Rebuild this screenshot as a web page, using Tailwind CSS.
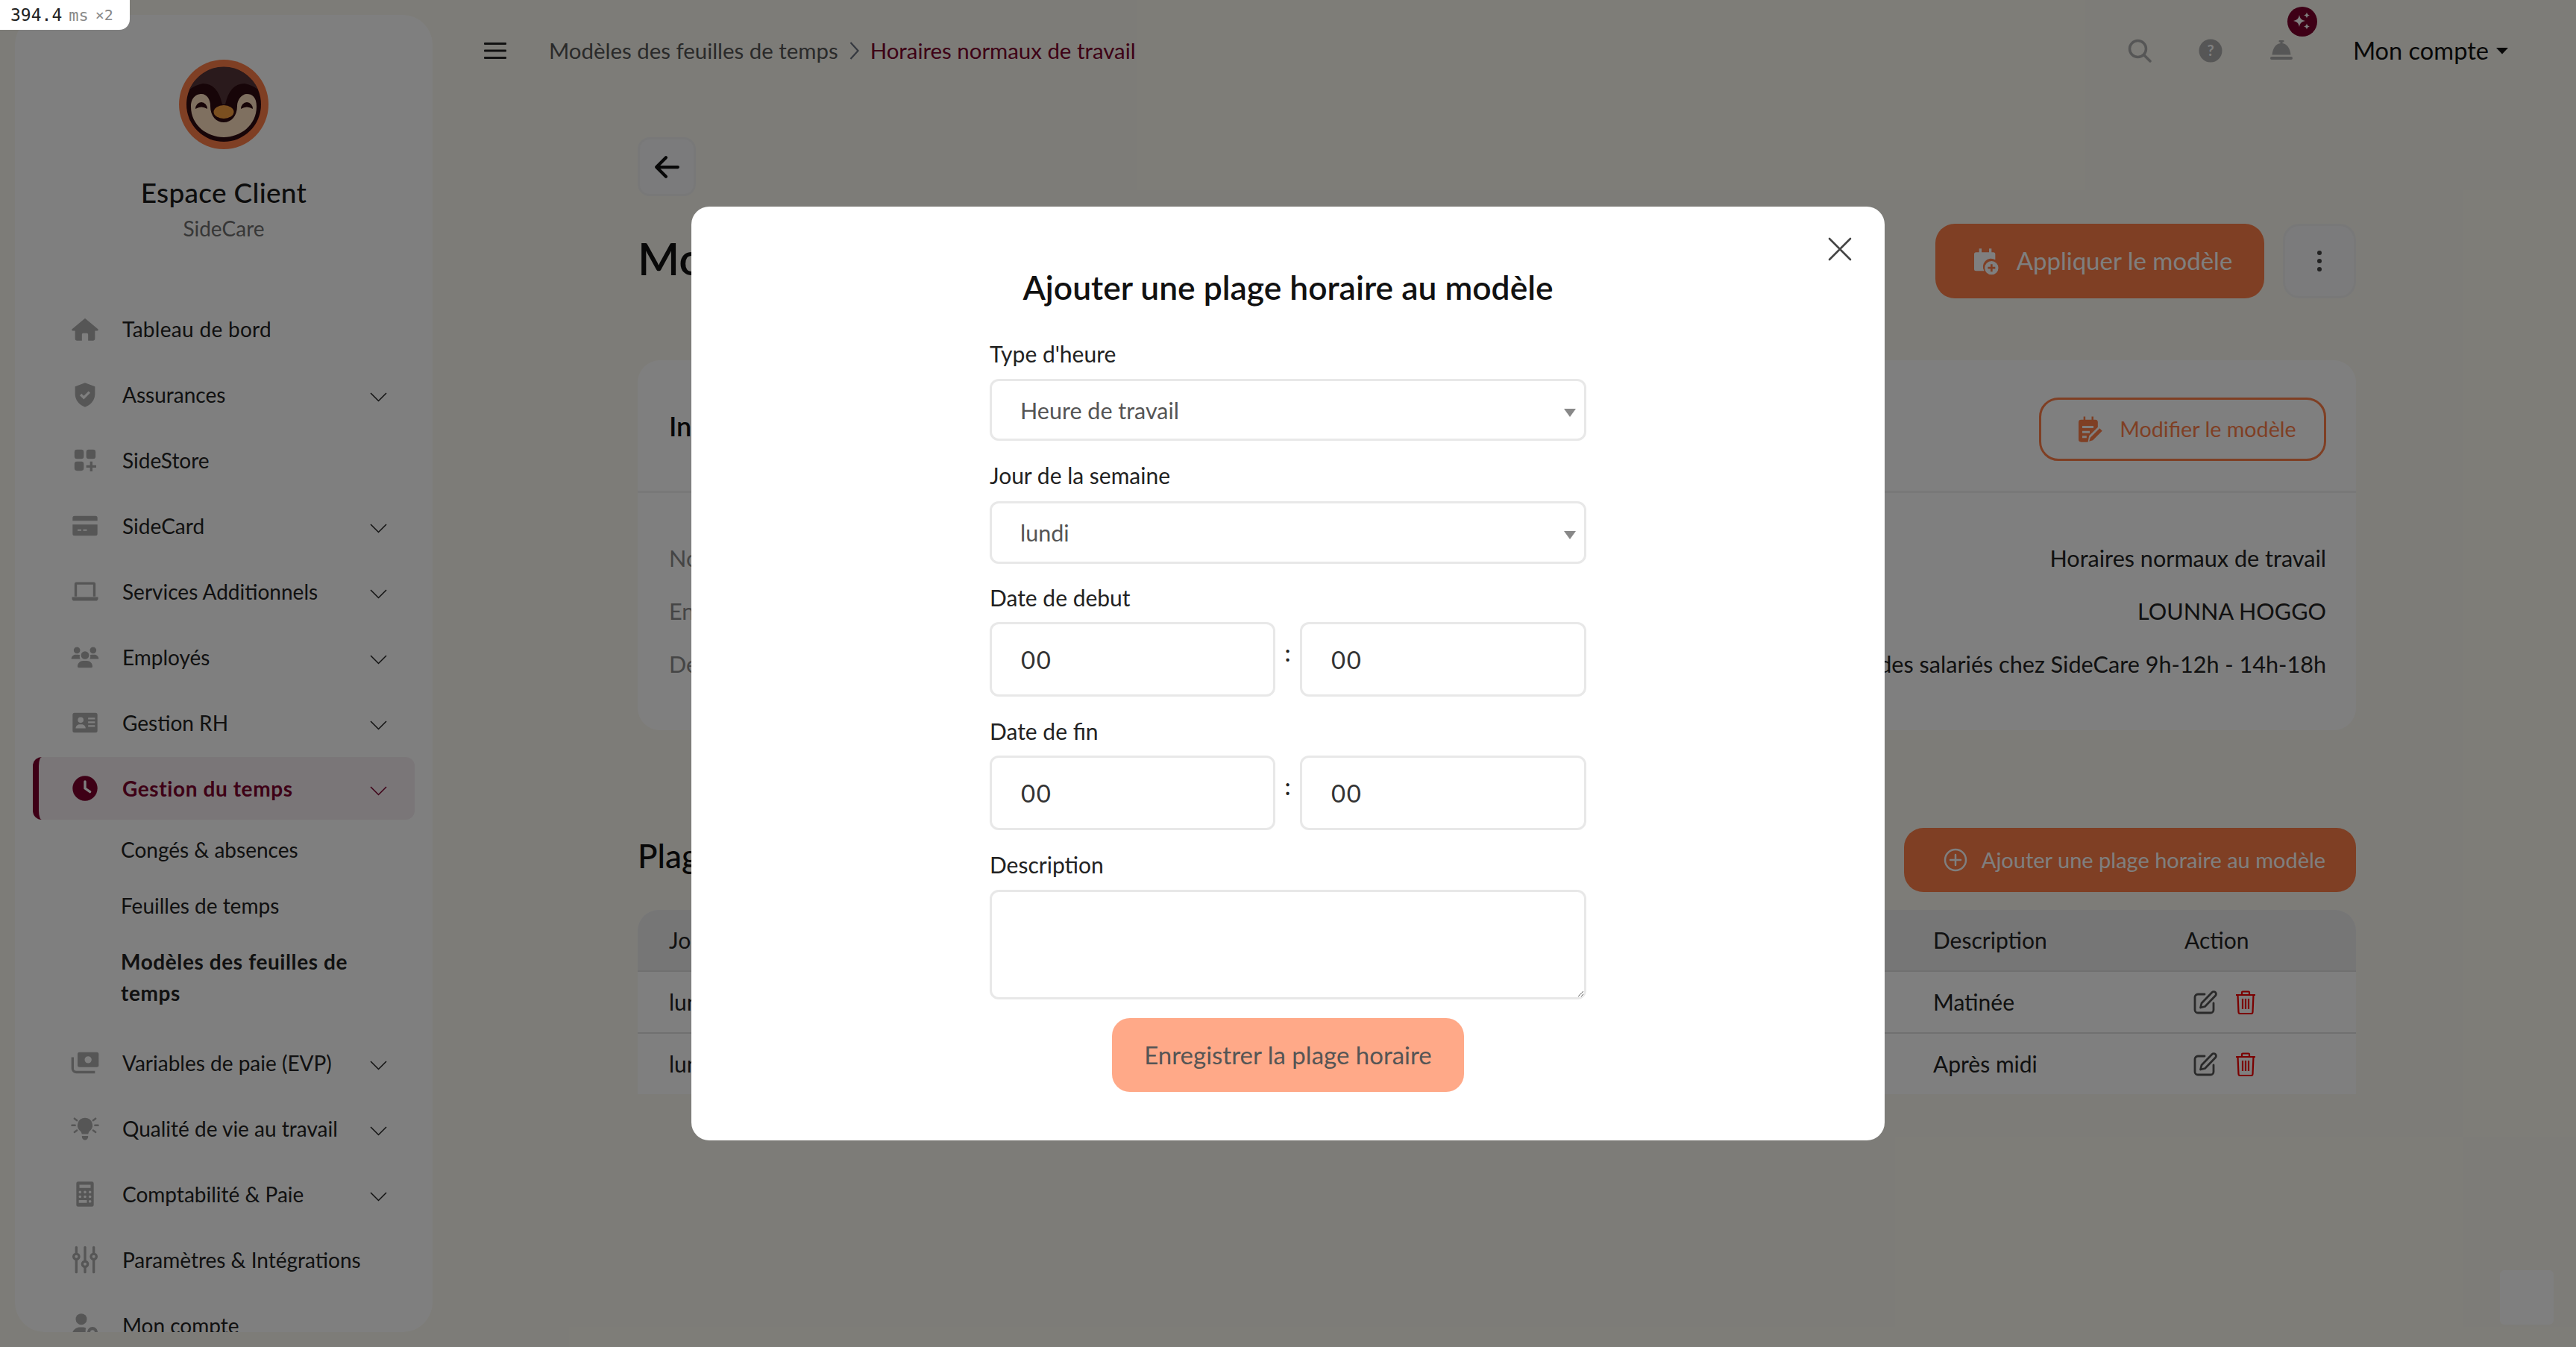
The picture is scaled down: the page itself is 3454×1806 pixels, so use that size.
<!DOCTYPE html>
<html lang="fr">
<head>
<meta charset="utf-8">
<title>Horaires normaux de travail</title>
<script src="https://cdn.jsdelivr.net/npm/@tailwindcss/browser@4"></script>
</head>
<body class="relative h-[1806px] w-[3454px] overflow-hidden bg-[#fbf9f0] text-[#222] [font-family:Lato,sans-serif]">
<div class="flex h-full">
  <!-- Sidebar -->
  <aside class="mt-5 ml-5 h-[1766px] w-[560px] shrink-0 overflow-hidden rounded-[40px] bg-white pt-[60px]">
    <svg class="mx-auto block h-[120px] w-[120px]" viewBox="0 0 120 120">
      <circle cx="60" cy="60" r="60" fill="#ff7e48"/>
      <circle cx="60" cy="60" r="50" fill="#2e0a10"/>
      <path d="M14 40A50 50 0 0 1 106 40Q98 34 88 32Q68 32 62 60L58 60Q52 32 32 32Q22 34 14 40Z" fill="#553538"/>
      <path d="M16 63C16 50 24 46 30 46C38 46 42 54 42 62C42 76 50 84 60 84C70 84 78 76 78 62C78 54 84 46 91 46C98 46 104 50 104 63C104 88 82 104 60 104C38 104 16 88 16 63Z" fill="#ffe0c0"/>
      <path d="M22 66a8 9 0 0 1 16 0q-8-5-16 0ZM83 66a8 9 0 0 1 16 0q-8-5-16 0Z" fill="#2e0a10"/>
      <ellipse cx="60" cy="70" rx="13.5" ry="9" fill="#f59e40"/>
    </svg>
    <div class="mt-9 text-center text-[37px] leading-[44px] font-medium tracking-[0.3px] text-[#1a1a1a]">Espace Client</div>
    <div class="mt-1.5 text-center text-[28px] leading-10 text-[#6e6e6e]">SideCare</div>
    <nav class="mt-[73px] mx-6 text-[28px] leading-[40px]">
      <a class="mb-1 flex h-[84px] items-center pl-[50px]">
        <svg class="h-10 w-10 shrink-0 text-[#acacac]" viewBox="0 0 24 24" fill="currentColor"><path d="M12 3.5 1.6 12.2c-.5.5-.2 1.3.5 1.3H4v6.5c0 .8.7 1.5 1.5 1.5h4v-5a1 1 0 0 1 1-1h3a1 1 0 0 1 1 1v5h4c.8 0 1.5-.7 1.5-1.5v-6.5h1.900c.7 0 1-.8.5-1.3z"/></svg>
        <span class="ml-[30px] tracking-[0.3px]">Tableau de bord</span>
      </a>
      <a class="mb-1 flex h-[84px] items-center pl-[50px] pr-[37px]">
        <svg class="h-10 w-10 shrink-0 text-[#acacac]" viewBox="0 0 24 24" fill="currentColor"><path d="M12 2.5 4 5.5v6c0 4.8 3.4 9 8 10.500 4.600-1.500 8-5.700 8-10.500v-6z"/><path d="m8.500 12 2.500 2.500 4.500-4.500" fill="none" stroke="#fff" stroke-width="2"/></svg>
        <span class="ml-[30px] flex-1">Assurances</span>
        <svg class="mt-1.5 h-4 w-[23px]" viewBox="0 0 23 16" fill="none" stroke="#222" stroke-width="1.500"><path d="m1 3 10.500 10.500L22 3"/></svg>
      </a>
      <a class="mb-1 flex h-[84px] items-center pl-[50px]">
        <svg class="h-10 w-10 shrink-0 text-[#acacac]" viewBox="0 0 24 24" fill="currentColor"><rect x="3.500" y="3.500" width="7.500" height="7.500" rx="2"/><rect x="13" y="3.500" width="7.500" height="7.500" rx="2"/><rect x="3.500" y="13" width="7.500" height="7.500" rx="2"/><path d="M16 13h2v3h3v2h-3v3h-2v-3h-3v-2h3z"/></svg>
        <span class="ml-[30px]">SideStore</span>
      </a>
      <a class="mb-1 flex h-[84px] items-center pl-[50px] pr-[37px]">
        <svg class="h-10 w-10 shrink-0 text-[#acacac]" viewBox="0 0 24 24" fill="currentColor"><path d="M3.500 4h17A1.500 1.500 0 0 1 22 5.500V8H2V5.500A1.500 1.500 0 0 1 3.500 4ZM2 11h20v7.500a1.500 1.500 0 0 1-1.500 1.500h-17A1.500 1.500 0 0 1 2 18.500Z"/><path d="M6 15.500h3M10.500 15.500h3" stroke="#fff" stroke-width="1.200"/></svg>
        <span class="ml-[30px] flex-1">SideCard</span>
        <svg class="mt-1.5 h-4 w-[23px]" viewBox="0 0 23 16" fill="none" stroke="#222" stroke-width="1.500"><path d="m1 3 10.500 10.500L22 3"/></svg>
      </a>
      <a class="mb-1 flex h-[84px] items-center pl-[50px] pr-[37px]">
        <svg class="h-10 w-10 shrink-0 text-[#acacac]" viewBox="0 0 24 24" fill="currentColor"><path d="M5 4.500h14A1.500 1.500 0 0 1 20.500 6v10h-2V6.500h-13V16h-2V6A1.500 1.500 0 0 1 5 4.500Z"/><path d="M1.500 16.500h21v1a2 2 0 0 1-2 2h-17a2 2 0 0 1-2-2z"/></svg>
        <span class="ml-[30px] flex-1">Services Additionnels</span>
        <svg class="mt-1.5 h-4 w-[23px]" viewBox="0 0 23 16" fill="none" stroke="#222" stroke-width="1.500"><path d="m1 3 10.500 10.500L22 3"/></svg>
      </a>
      <a class="mb-1 flex h-[84px] items-center pl-[50px] pr-[37px]">
        <svg class="h-10 w-10 shrink-0 text-[#acacac]" viewBox="0 0 24 24" fill="currentColor"><circle cx="5.500" cy="6.500" r="2.600"/><circle cx="18.500" cy="6.500" r="2.600"/><circle cx="12" cy="10.500" r="3.200"/><path d="M1 13.500c0-2 1.500-3.500 3.500-3.500h2c.5 0 1 .1 1.400.3-.4 1-.3 2.200.3 3.200zM23 13.500c0-2-1.500-3.500-3.500-3.500h-2c-.5 0-1 .1-1.400.3.400 1 .3 2.200-.3 3.200zM6 19.500c0-2.500 2-4.500 4.500-4.500h3c2.500 0 4.500 2 4.500 4.500 0 .6-.4 1-1 1H7c-.6 0-1-.4-1-1Z"/></svg>
        <span class="ml-[30px] flex-1">Employés</span>
        <svg class="mt-1.5 h-4 w-[23px]" viewBox="0 0 23 16" fill="none" stroke="#222" stroke-width="1.500"><path d="m1 3 10.500 10.500L22 3"/></svg>
      </a>
      <a class="mb-1 flex h-[84px] items-center pl-[50px] pr-[37px]">
        <svg class="h-10 w-10 shrink-0 text-[#acacac]" viewBox="0 0 24 24" fill="currentColor"><path fill-rule="evenodd" d="M3.500 4h17A1.500 1.500 0 0 1 22 5.500v13a1.500 1.500 0 0 1-1.500 1.500h-17A1.500 1.500 0 0 1 2 18.500v-13A1.500 1.500 0 0 1 3.500 4Zm5 3.500a2.300 2.300 0 1 0 0 4.600 2.300 2.300 0 0 0 0-4.600ZM4.500 16.500h8c0-1.800-1.500-3.200-3-3.200h-2c-1.500 0-3 1.400-3 3.200ZM14.500 8v1.300h5.500V8Zm0 3v1.300h5.500V11Zm0 3v1.300h5.500V14Z"/></svg>
        <span class="ml-[30px] flex-1">Gestion RH</span>
        <svg class="mt-1.5 h-4 w-[23px]" viewBox="0 0 23 16" fill="none" stroke="#222" stroke-width="1.500"><path d="m1 3 10.500 10.500L22 3"/></svg>
      </a>
      <a class="mb-1 flex h-[84px] items-center rounded-[12px] border-l-[8px] border-[#7c002c] bg-[#f4ecf0] pl-[42px] pr-[37px] font-bold text-[#7c002c]">
        <svg class="h-10 w-10 shrink-0" viewBox="0 0 24 24"><circle cx="12" cy="12" r="10" fill="#7c002c"/><path d="M12 6.500V12l4 2.800" fill="none" stroke="#fff" stroke-width="2" stroke-linecap="round"/></svg>
        <span class="ml-[30px] flex-1 tracking-[0.6px]">Gestion du temps</span>
        <svg class="mt-1.5 h-4 w-[23px]" viewBox="0 0 23 16" fill="none" stroke="#7c002c" stroke-width="1.500"><path d="m1 3 10.500 10.500L22 3"/></svg>
      </a>
      <ul class="flex flex-col gap-[33px] pt-[15px] pb-[31px] pl-[118px] leading-[42px]">
        <li>Congés &amp; absences</li>
        <li>Feuilles de temps</li>
        <li class="w-[340px] font-bold tracking-[0.6px]">Modèles des feuilles de temps</li>
      </ul>
      <a class="mb-1 flex h-[84px] items-center pl-[50px] pr-[37px]">
        <svg class="h-10 w-10 shrink-0 text-[#acacac]" viewBox="0 0 24 24" fill="currentColor"><path fill-rule="evenodd" d="M7.500 3.500h14A1.500 1.500 0 0 1 23 5v9a1.500 1.500 0 0 1-1.500 1.500h-14A1.500 1.500 0 0 1 6 14V5a1.500 1.500 0 0 1 1.500-1.500Zm7 3.200a2.800 2.800 0 1 0 0 5.600 2.800 2.800 0 0 0 0-5.600Z"/><path d="M2 7.500v9a3 3 0 0 0 3 3h15" fill="none" stroke="currentColor" stroke-width="2"/></svg>
        <span class="ml-[30px] flex-1">Variables de paie (EVP)</span>
        <svg class="mt-1.5 h-4 w-[23px]" viewBox="0 0 23 16" fill="none" stroke="#222" stroke-width="1.500"><path d="m1 3 10.500 10.500L22 3"/></svg>
      </a>
      <a class="mb-1 flex h-[84px] items-center pl-[50px] pr-[37px]">
        <svg class="h-10 w-10 shrink-0 text-[#acacac]" viewBox="0 0 24 24" fill="currentColor"><path d="M12 3.500a6 6 0 0 0-3.600 10.800c.5.500.8 1.200 1 2.200h5.200c.2-1 .5-1.700 1-2.200A6 6 0 0 0 12 3.500ZM9.500 18h5v.8a2.500 2.500 0 0 1-5 0Z"/><path d="M3.500 4 5.500 5.500M20.500 4l-2 1.500M1.500 9.500h2.500M20 9.500h2.500M3.500 15l2-1.500M20.500 15l-2-1.500" stroke="currentColor" stroke-width="1.500" stroke-linecap="round"/></svg>
        <span class="ml-[30px] flex-1">Qualité de vie au travail</span>
        <svg class="mt-1.5 h-4 w-[23px]" viewBox="0 0 23 16" fill="none" stroke="#222" stroke-width="1.500"><path d="m1 3 10.500 10.500L22 3"/></svg>
      </a>
      <a class="mb-1 flex h-[84px] items-center pl-[50px] pr-[37px]">
        <svg class="h-10 w-10 shrink-0 text-[#acacac]" viewBox="0 0 24 24" fill="currentColor"><path fill-rule="evenodd" d="M6.500 2h11A1.500 1.500 0 0 1 19 3.500v17a1.500 1.500 0 0 1-1.500 1.500h-11A1.500 1.500 0 0 1 5 20.500v-17A1.500 1.500 0 0 1 6.500 2ZM7.500 4.500V7h9V4.500ZM8 9.300a1.100 1.100 0 1 0 0 2.200 1.100 1.100 0 0 0 0-2.200Zm4 0a1.100 1.100 0 1 0 0 2.200 1.100 1.100 0 0 0 0-2.200Zm4 0a1.100 1.100 0 1 0 0 2.200 1.100 1.100 0 0 0 0-2.200ZM8 13a1.100 1.100 0 1 0 0 2.200A1.100 1.100 0 0 0 8 13Zm4 0a1.100 1.100 0 1 0 0 2.200 1.100 1.100 0 0 0 0-2.200Zm4 0a1.100 1.100 0 1 0 0 2.200 1.100 1.100 0 0 0 0-2.200ZM7 16.800V19h6.500v-2.200ZM16 16.800a1.100 1.100 0 1 0 0 2.200 1.100 1.100 0 0 0 0-2.200Z"/></svg>
        <span class="ml-[30px] flex-1">Comptabilité &amp; Paie</span>
        <svg class="mt-1.5 h-4 w-[23px]" viewBox="0 0 23 16" fill="none" stroke="#222" stroke-width="1.500"><path d="m1 3 10.500 10.500L22 3"/></svg>
      </a>
      <a class="mb-1 flex h-[84px] items-center pl-[50px]">
        <svg class="h-10 w-10 shrink-0 text-[#acacac]" viewBox="0 0 24 24" fill="none" stroke="currentColor" stroke-width="2"><path d="M5 2v5M5 12v10M12 2v11M12 18v4M19 2v5M19 12v10" stroke-linecap="round"/><circle cx="5" cy="9.500" r="2.200"/><circle cx="12" cy="15.500" r="2.200"/><circle cx="19" cy="9.500" r="2.200"/></svg>
        <span class="ml-[30px]">Paramètres &amp; Intégrations</span>
      </a>
      <a class="mb-1 flex h-[84px] items-center pl-[50px]">
        <svg class="h-10 w-10 shrink-0 text-[#acacac]" viewBox="0 0 24 24" fill="currentColor"><circle cx="9" cy="7" r="4.500"/><path d="M1.500 20c0-3.600 2.900-6.500 6.500-6.500h2c1 0 2 .2 2.800.7-.7 1.700-.5 3.900.4 5.800z"/><circle cx="18" cy="17.500" r="3" fill="none" stroke="currentColor" stroke-width="2.500"/></svg>
        <span class="ml-[30px]">Mon compte</span>
      </a>
    </nav>
  </aside>

  <!-- Main -->
  <main class="flex-1 min-w-0">
    <header class="flex h-[136px] items-center pl-[69px] pr-[91px]">
      <svg class="h-[24px] w-[30px] shrink-0" viewBox="0 0 30 24" fill="#222"><rect y="1" width="30" height="3" rx="1"/><rect y="10.500" width="30" height="3" rx="1"/><rect y="20" width="30" height="3" rx="1"/></svg>
      <span class="ml-[57px] text-[29.4px] leading-10 text-[#555]">Modèles des feuilles de temps</span>
      <svg class="ml-[15px] h-[26px] w-[14px]" viewBox="0 0 14 26" fill="none" stroke="#6b7280" stroke-width="2.200"><path d="m1.500 2 10 11-10 11"/></svg>
      <span class="ml-[14px] text-[29.4px] leading-10 text-[#7c002c]">Horaires normaux de travail</span>
      <div class="ml-auto flex items-center">
        <svg class="h-8 w-8 text-[#acacac]" viewBox="0 0 32 32" fill="none" stroke="currentColor" stroke-width="3.500"><circle cx="13.500" cy="13.500" r="11"/><path d="m21.500 21.500 8.500 8.500" stroke-linecap="round"/></svg>
        <svg class="ml-[63px] h-8 w-8 text-[#acacac]" viewBox="0 0 32 32"><circle cx="16" cy="16" r="15.500" fill="currentColor"/><text x="16" y="23" text-anchor="middle" font-size="20" font-weight="700" fill="#fff" font-family="Lato">?</text></svg>
        <div class="relative ml-[63px] h-8 w-8">
          <svg class="h-8 w-8 text-[#acacac]" viewBox="0 0 32 32" fill="currentColor"><rect x="12.500" y="2" width="7" height="2.500" rx="1"/><rect x="14.500" y="3" width="3" height="4"/><path d="M16 6c7 0 11.500 6 12.500 15.500h-25C4.500 12 9 6 16 6Z"/><rect x="1" y="24" width="30" height="4" rx="2"/></svg>
          <div class="absolute -top-[43px] left-[24px] flex h-10 w-10 items-center justify-center rounded-full bg-[#7c002c]">
            <svg class="h-[30px] w-[30px]" viewBox="0 0 30 30" fill="#fff"><path d="M11 6c1 5 3 7 8 8-5 1-7 3-8 8-1-5-3-7-8-8 5-1 7-3 8-8ZM21 2.500c.5 2.500 1.500 3.500 4 4-2.500.5-3.500 1.500-4 4-.5-2.500-1.500-3.500-4-4 2.500-.5 3.500-1.500 4-4ZM21 17.500c.5 2.500 1.500 3.500 4 4-2.500.5-3.500 1.500-4 4-.5-2.500-1.500-3.500-4-4 2.500-.5 3.500-1.500 4-4Z"/></svg>
          </div>
        </div>
        <span class="ml-[80px] text-[32.600px] leading-10 text-[#111]">Mon compte</span>
        <svg class="ml-2.5 h-2.5 w-4" viewBox="0 0 16 10" fill="#111"><path d="M0 1h16L8 9.500z"/></svg>
      </div>
    </header>

    <div class="mr-[295px] ml-[275px]">
      <button class="mt-12 flex h-[79px] w-[78px] items-center justify-center rounded-2xl border-[3px] border-[#f1f1f1] bg-[#f6f6f8]">
        <svg class="h-[34px] w-[34px]" viewBox="0 0 32 32" fill="none" stroke="#111" stroke-width="4" stroke-linecap="round" stroke-linejoin="round"><path d="M30 16H4M15 4 3 16l12 12"/></svg>
      </button>

      <div class="mt-[37px] flex h-[100px] items-center">
        <h1 class="flex-1 pb-2 text-[60px] font-semibold text-[#111]">Modèle</h1>
        <button class="flex h-[100px] w-[441px] items-center justify-center rounded-[26px] bg-[#ff7e48] pl-1 text-[33px] text-white">
          <svg class="h-10 w-10" viewBox="0 0 24 24" fill="#fff"><path d="M7 2h2v3h6V2h2v3h1.500A1.500 1.500 0 0 1 20 6.500V11a6.500 6.500 0 0 0-8.900 9H4.500A1.500 1.500 0 0 1 3 18.500v-12A1.500 1.500 0 0 1 4.500 5H7Z"/><path fill-rule="evenodd" d="M17 12a5.500 5.500 0 1 0 0 11 5.500 5.500 0 0 0 0-11Zm-.8 2.500h1.600v2.200H20v1.600h-2.200v2.200h-1.600v-2.200H14v-1.600h2.200Z"/></svg>
          <span class="ml-[22px]">Appliquer le modèle</span>
        </button>
        <button class="ml-[25px] flex h-[100px] w-[98px] flex-col items-center justify-center gap-[5px] rounded-[22px] border-[3px] border-[#f1f1f1] bg-[#f6f6f8]">
          <span class="h-1.5 w-1.5 rounded-full bg-[#444]"></span>
          <span class="h-1.5 w-1.5 rounded-full bg-[#444]"></span>
          <span class="h-1.5 w-1.5 rounded-full bg-[#444]"></span>
        </button>
      </div>

      <section class="mt-[83px] h-[496px] rounded-[30px] bg-white">
        <div class="flex h-[178px] items-center justify-between border-b-[3px] border-[#f1f1f1] pl-[42px] pr-[40px]">
          <h2 class="text-[36px] font-semibold text-[#111]">Informations</h2>
          <button class="mt-[10px] flex h-[85px] w-[385px] items-center justify-center rounded-[26px] border-[3px] border-[#ff7e48] pl-2 text-[28.700px] text-[#ff7e48]">
            <svg class="h-10 w-10" viewBox="0 0 24 24" fill="#ff7e48"><path fill-rule="evenodd" d="M7 1.500h1.500V4h5V1.500H15V4h1.500A2 2 0 0 1 18.500 6v4l-7 7-1 5H5a2 2 0 0 1-2-2V6a2 2 0 0 1 2-2h2ZM6 9v1.800h9V9Zm0 4v1.800h6V13Zm0 4v1.800h3.500V17Z"/><path d="m20 11 2 2-7.500 7.500-3 1 1-3Z"/></svg>
            <span class="ml-5">Modifier le modèle</span>
          </button>
        </div>
        <dl class="flex flex-col pl-[42px] pr-[40px] pt-[68px] text-[30.600px] leading-10">
          <div class="flex h-[71px] justify-between"><dt class="text-[#8a8a8a]">Nom</dt><dd>Horaires normaux de travail</dd></div>
          <div class="flex h-[71px] justify-between"><dt class="text-[#8a8a8a]">Entreprise</dt><dd>LOUNNA HOGGO</dd></div>
          <div class="flex h-[71px] justify-between"><dt class="text-[#8a8a8a]">Description</dt><dd>Horaires normaux des salariés chez SideCare 9h-12h - 14h-18h</dd></div>
        </dl>
      </section>

      <div class="mt-[131px] flex h-[86px] items-center justify-between">
        <h2 class="pb-3 text-[44px] font-medium text-[#111]">Plages horaires</h2>
        <button class="flex h-[86px] w-[606px] items-center justify-center rounded-[26px] bg-[#ff7e48] pl-3 text-[29px] text-white">
          <svg class="h-8 w-8" viewBox="0 0 32 32" fill="none" stroke="#fff" stroke-width="2.500"><circle cx="16" cy="16" r="14"/><path d="M16 9v14M9 16h14" stroke-linecap="round"/></svg>
          <span class="ml-[19px]">Ajouter une plage horaire au modèle</span>
        </button>
      </div>

      <div class="mt-6 overflow-hidden rounded-t-[28px] bg-white text-[30px]">
        <div class="grid h-[81px] grid-cols-[1737px_337px_1fr] items-center bg-[#ececec]">
          <span class="pl-[42px]">Jour</span><span>Description</span><span>Action</span>
        </div>
        <div class="grid h-[83px] grid-cols-[1737px_337px_1fr] items-center border-t-[2px] border-[#e0e0e0]">
          <span class="pl-[42px]">lundi</span><span>Matinée</span>
          <span class="flex items-center pl-3 gap-[24px]">
            <svg class="h-8 w-8" viewBox="0 0 32 32" fill="none" stroke="#555" stroke-width="2.800" stroke-linecap="round" stroke-linejoin="round"><path d="M15 5H6a4 4 0 0 0-4 4v17a4 4 0 0 0 4 4h17a4 4 0 0 0 4-4v-9"/><path d="M25 2.500a3 3 0 0 1 4.500 4.500L15.500 21.500l-6 1.500 1.500-6Z"/></svg>
            <svg class="h-8 w-[28px]" viewBox="0 0 28 32" fill="none" stroke="#f40000" stroke-width="2.200"><path d="M1 6h26M9 5V2.500A1 1 0 0 1 10 1.500h8a1 1 0 0 1 1 1V5M3.500 6l1 23a2 2 0 0 0 2 2h15a2 2 0 0 0 2-2l1-23M10 11v14M14 11v14M18 11v14"/></svg>
          </span>
        </div>
        <div class="grid h-[83px] grid-cols-[1737px_337px_1fr] items-center border-t-[2px] border-[#e0e0e0]">
          <span class="pl-[42px]">lundi</span><span>Après midi</span>
          <span class="flex items-center pl-3 gap-[24px]">
            <svg class="h-8 w-8" viewBox="0 0 32 32" fill="none" stroke="#555" stroke-width="2.800" stroke-linecap="round" stroke-linejoin="round"><path d="M15 5H6a4 4 0 0 0-4 4v17a4 4 0 0 0 4 4h17a4 4 0 0 0 4-4v-9"/><path d="M25 2.500a3 3 0 0 1 4.500 4.500L15.500 21.500l-6 1.500 1.500-6Z"/></svg>
            <svg class="h-8 w-[28px]" viewBox="0 0 28 32" fill="none" stroke="#f40000" stroke-width="2.200"><path d="M1 6h26M9 5V2.500A1 1 0 0 1 10 1.500h8a1 1 0 0 1 1 1V5M3.500 6l1 23a2 2 0 0 0 2 2h15a2 2 0 0 0 2-2l1-23M10 11v14M14 11v14M18 11v14"/></svg>
          </span>
        </div>
      </div>
    </div>
  </main>
</div>

<!-- floating corner button -->
<div class="absolute top-[1703px] left-[3352px] h-[73px] w-[72px] rounded-md bg-white"></div>

<!-- Modal backdrop -->
<div class="absolute inset-0 bg-black/50"></div>

<!-- Modal -->
<div class="absolute top-[277px] left-[927px] h-[1252px] w-[1600px] rounded-[24px] bg-white">
  <svg class="absolute top-[41px] right-[44px] h-8 w-8" viewBox="0 0 32 32" fill="none" stroke="#444" stroke-width="2.600" stroke-linecap="round"><path d="m2 2 28 28M30 2 2 30"/></svg>
  <h3 class="pt-[78px] text-center text-[44.400px] leading-[60px] font-semibold text-[#111]">Ajouter une plage horaire au modèle</h3>
  <form class="mx-auto mt-[39px] w-[800px] text-[30px] text-[#222]">
    <label class="block leading-10">Type d'heure</label>
    <div class="relative mt-[14px] h-[83px]">
      <select class="h-full w-full appearance-none rounded-[12px] border-[3px] border-[#e8e8e8] bg-white pt-0.5 pl-[38px] text-[30.500px] text-[#555]"><option>Heure de travail</option></select>
      <svg class="absolute top-[40px] right-[14px] h-[11px] w-4" viewBox="0 0 16 11" fill="#888"><path d="M0 0h16L8 11z"/></svg>
    </div>
    <label class="mt-[26px] block leading-10">Jour de la semaine</label>
    <div class="relative mt-[15px] h-[84px]">
      <select class="h-full w-full appearance-none rounded-[12px] border-[3px] border-[#e8e8e8] bg-white pt-0.5 pl-[38px] text-[30.500px] text-[#555]"><option>lundi</option></select>
      <svg class="absolute top-[40px] right-[14px] h-[11px] w-4" viewBox="0 0 16 11" fill="#888"><path d="M0 0h16L8 11z"/></svg>
    </div>
    <label class="mt-[25px] block leading-10">Date de debut</label>
    <div class="mt-[13px] flex h-[100px]">
      <input value="00" class="w-[383px] rounded-[12px] border-[3px] border-[#e8e8e8] pt-0.5 pl-[39px] text-[33px] tracking-[1.500px] text-[#333]">
      <span class="w-[33px] pt-[21px] text-center leading-10 font-semibold">:</span>
      <input value="00" class="w-[384px] rounded-[12px] border-[3px] border-[#e8e8e8] pt-0.5 pl-[39px] text-[33px] tracking-[1.500px] text-[#333]">
    </div>
    <label class="mt-[26px] block leading-10">Date de fin</label>
    <div class="mt-[13px] flex h-[100px]">
      <input value="00" class="w-[383px] rounded-[12px] border-[3px] border-[#e8e8e8] pt-0.5 pl-[39px] text-[33px] tracking-[1.500px] text-[#333]">
      <span class="w-[33px] pt-[21px] text-center leading-10 font-semibold">:</span>
      <input value="00" class="w-[384px] rounded-[12px] border-[3px] border-[#e8e8e8] pt-0.5 pl-[39px] text-[33px] tracking-[1.500px] text-[#333]">
    </div>
    <label class="mt-[26px] block leading-10">Description</label>
    <textarea class="mt-[14px] block h-[147px] w-full rounded-[12px] border-[3px] border-[#e8e8e8]"></textarea>
    <button type="button" class="mx-auto mt-[25px] block h-[99px] w-[472px] rounded-[24px] bg-[#ffa988] text-[33px] text-[#555]">Enregistrer la plage horaire</button>
  </form>
</div>

<!-- Timing badge -->
<div class="absolute top-0 left-0 flex h-10 w-[174px] items-center gap-[9px] rounded-br-[14px] bg-white pl-[14px] text-[#222] [font-family:'DejaVu_Sans_Mono',monospace]">
  <span class="text-[23px]">394.4</span><span class="text-[22px] text-[#888]">ms</span><span class="text-[20px] text-[#888]">×2</span>
</div>
</body>
</html>
